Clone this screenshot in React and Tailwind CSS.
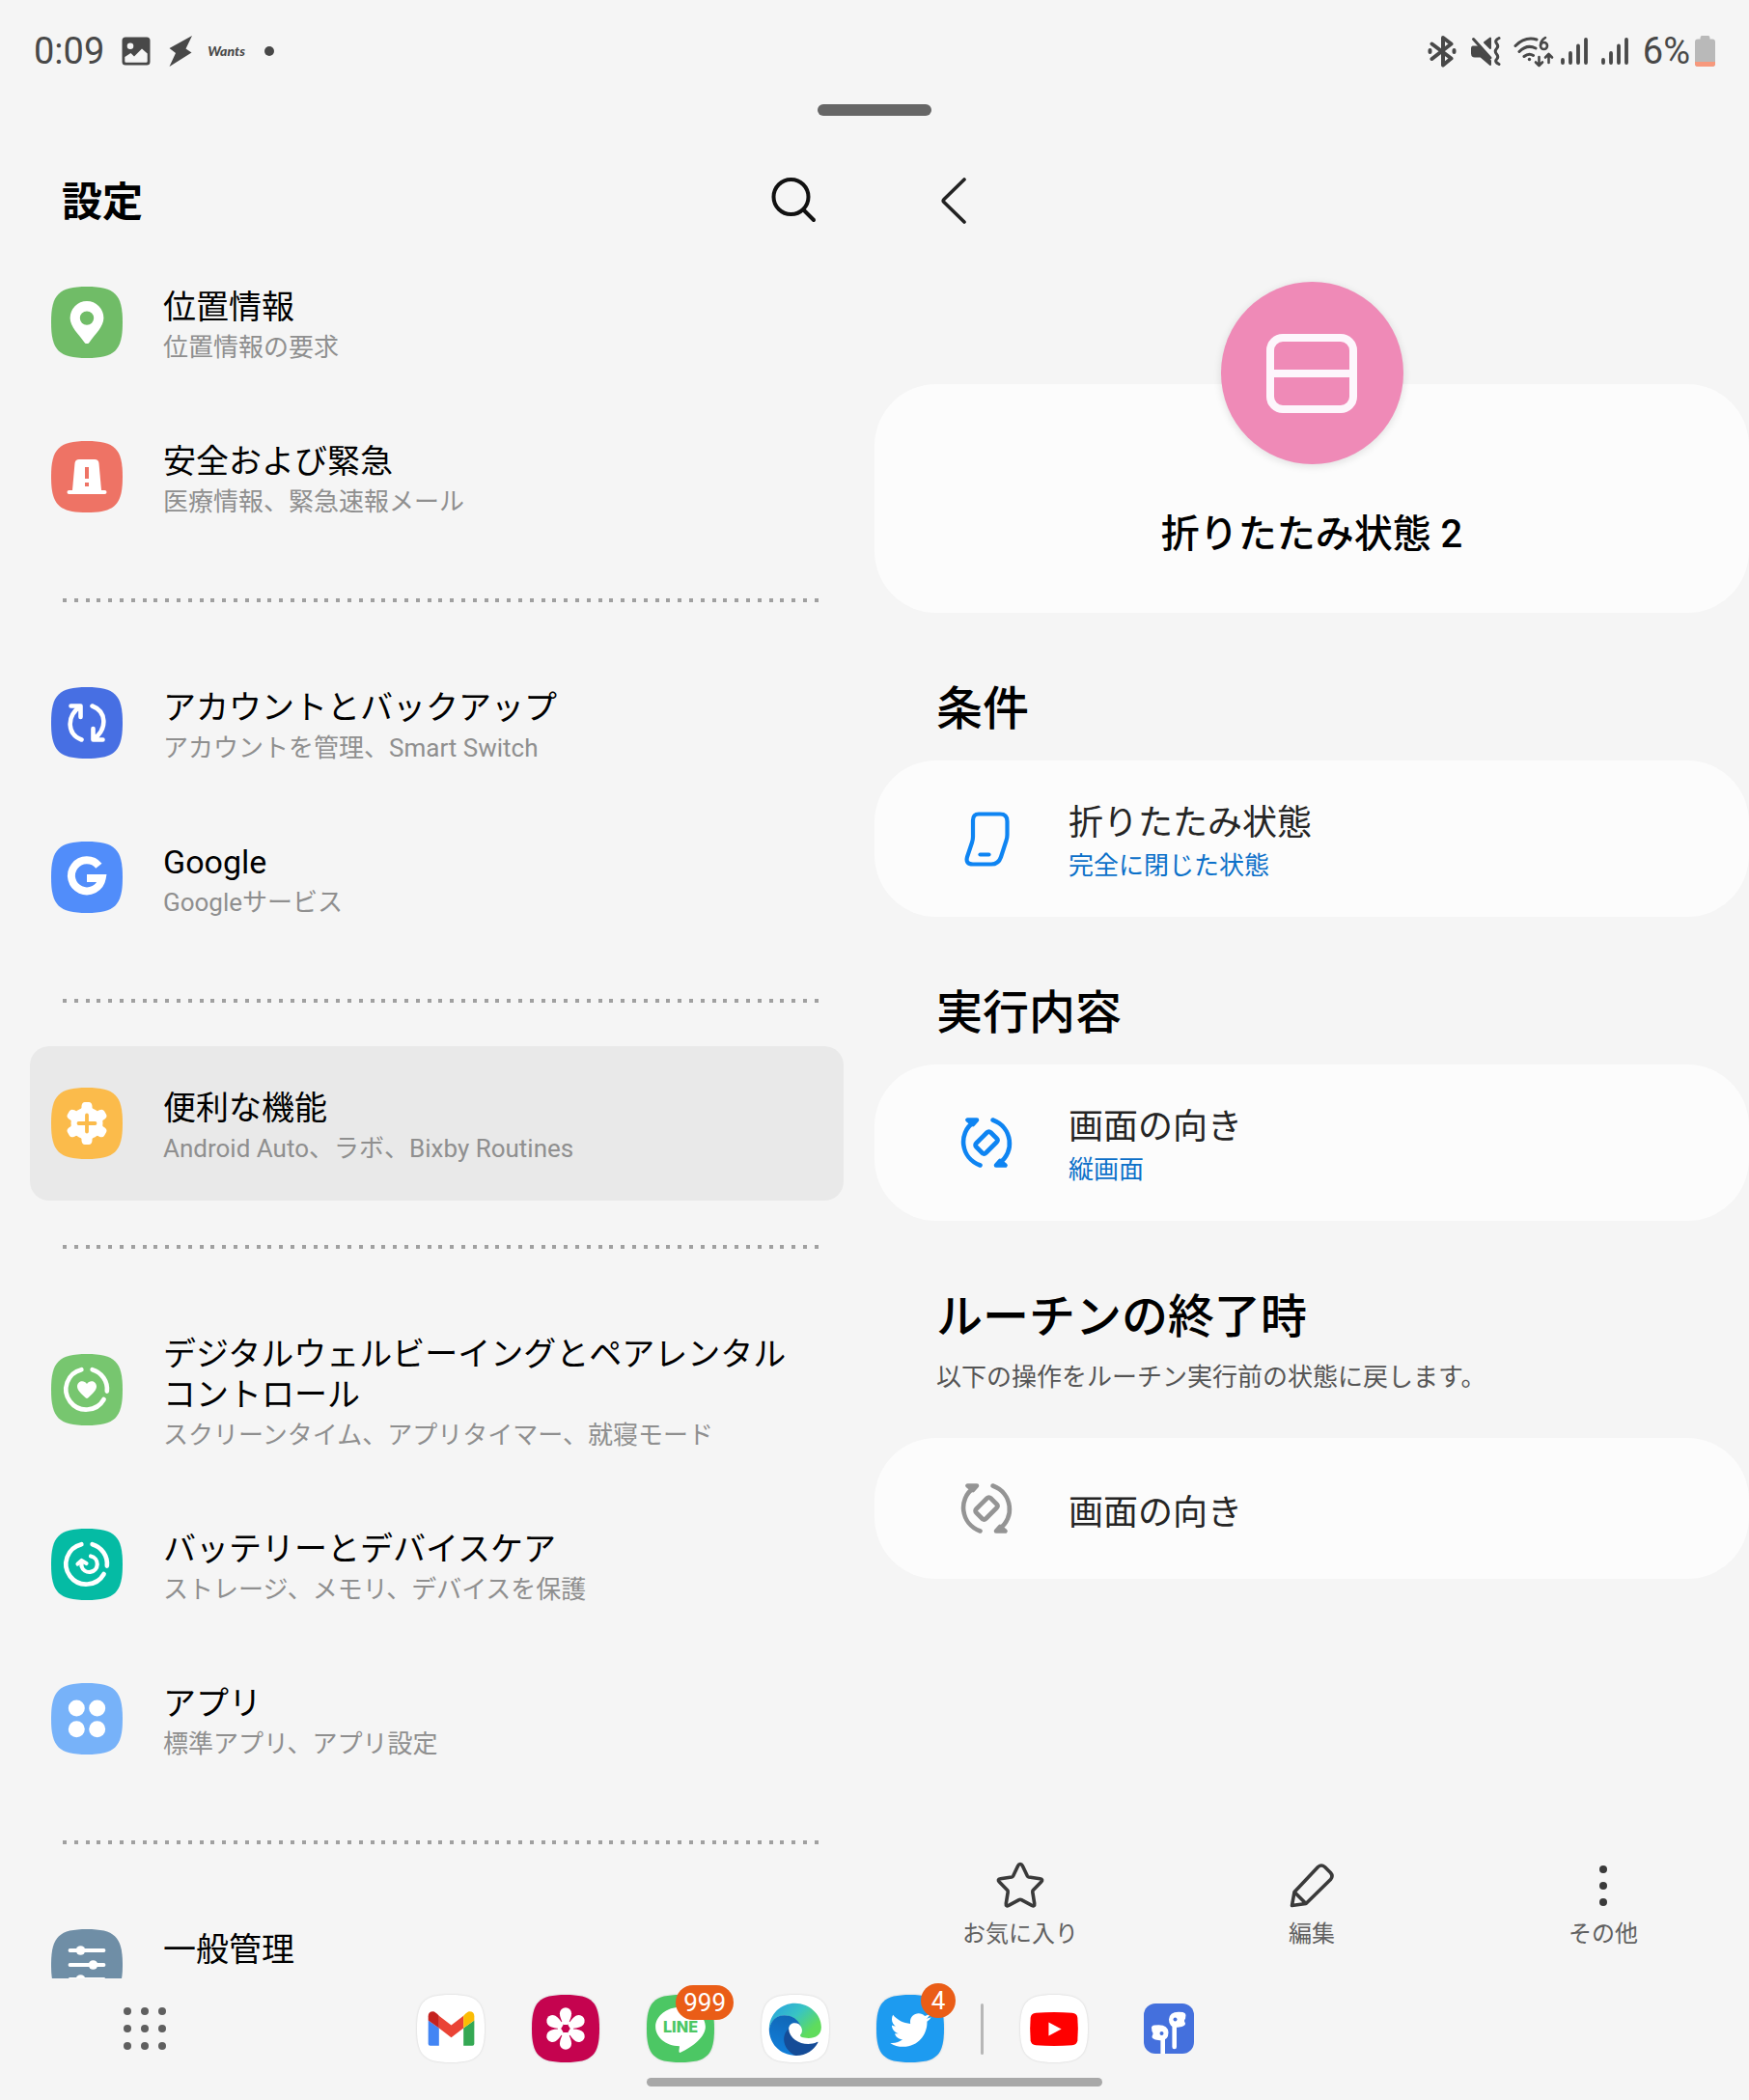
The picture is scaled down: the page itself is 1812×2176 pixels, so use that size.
import React from "react";
import { FaTwitter } from "react-icons/fa";

const TILE = "M37 0C66 0 74 8 74 37S66 74 37 74 0 66 0 37 8 0 37 0Z";

function Tile({ color, children }) {
  return (
    <svg viewBox="0 0 74 74" className="size-[74px] shrink-0" aria-hidden="true">
      <path d={TILE} fill={color} />
      {children}
    </svg>
  );
}

const stroke = { fill: "none", stroke: "#fff", strokeLinecap: "round", strokeLinejoin: "round" };

const CareRing = () => (
  <g {...stroke} strokeWidth="4.6">
    <path d="M42.6 16.2A21 21 0 0 1 57.8 38.6" />
    <path d="M54.6 47A21 21 0 1 1 31.4 16.2" />
  </g>
);

const icons = {
  location: (
    <Tile color="#70bc67">
      <path fill="#fff" fillRule="evenodd" d="M37 15a17.4 17.4 0 0 0-17.4 17.6c0 9 9 17 15 25.3a3 3 0 0 0 4.8 0c6-8.3 15-16.3 15-25.3A17.4 17.4 0 0 0 37 15Zm0 10.4a7.2 7.2 0 1 1 0 14.4 7.2 7.2 0 0 1 0-14.4Z" />
    </Tile>
  ),
  safety: (
    <Tile color="#ee7365">
      <path fill="#fff" d="M29 19h16q4 0 4.500 4l2.500 28H22l2.500-28q.5-4 4.500-4Z" />
      <path d="M18.500 53h37" stroke="#fff" strokeWidth="4" strokeLinecap="round" />
      <path d="M35 27h4v12h-4zM35 43h4v4h-4z" fill="#ee7365" />
    </Tile>
  ),
  account: (
    <Tile color="#476fe3">
      <g {...stroke} strokeWidth="4.6">
        <path d="M31.500 54.500C17 49 15 31 30 20M20.500 19.500H30.500V31" />
        <path d="M42.500 19.500C57 25 59 43 44 54M53.500 54.500H43.500V43" />
      </g>
    </Tile>
  ),
  google: (
    <Tile color="#518dfa">
      <path d="M49.400 25.300A16 16 0 1 0 52.700 38.100H37" fill="none" stroke="#fff" strokeWidth="8" />
    </Tile>
  ),
  advanced: (
    <Tile color="#fbbb4b">
      <g fill="#fff">
        <circle cx="37" cy="37" r="16.500" />
        {[0, 60, 120, 180, 240, 300].map((a) => (
          <path key={a} transform={`rotate(${a} 37 37)`} d="M27 25q4-.5 4.500-4.500V19q.5-4 3.500-4h4q3 0 3.500 4v1.500q.5 4 4.500 4.500Z" />
        ))}
      </g>
      <path d="M37 28.500v17M28.500 37h17" stroke="#fbbb4b" strokeWidth="3.800" strokeLinecap="round" />
    </Tile>
  ),
  wellbeing: (
    <Tile color="#77c66f">
      <CareRing />
      <path fill="#fff" d="M37 31c3-5 10-3 10 2.500 0 4-3.500 7-8.500 11.800q-1.500 1.400-3 0C30.500 40.500 27 37.500 27 33.500 27 28 34 26 37 31Z" />
    </Tile>
  ),
  battery: (
    <Tile color="#05bba4">
      <CareRing />
      <g {...stroke} strokeWidth="4.200">
        <path d="M41 28.500a8.300 8.300 0 1 1-9.500 10.500V34" />
        <path d="M27.500 36.500L31.500 33l5 3" />
      </g>
    </Tile>
  ),
  apps: (
    <Tile color="#77b2f9">
      <g fill="#fff">
        <circle cx="26.300" cy="26" r="8.500" />
        <circle cx="47.700" cy="26" r="8.500" />
        <circle cx="26.300" cy="47.700" r="8.500" />
        <circle cx="47.700" cy="47.700" r="8.500" />
      </g>
    </Tile>
  ),
  general: (
    <Tile color="#6f8ea6">
      <path d="M19.500 22h35M19.500 37h35M19.500 52h35" {...stroke} strokeWidth="3.800" />
      <g fill="#fff">
        <circle cx="30.500" cy="22" r="4.800" />
        <circle cx="43.500" cy="37" r="4.800" />
        <circle cx="30.500" cy="52" r="4.800" />
      </g>
    </Tile>
  ),
};

const groups = [
  [
    { icon: "location", title: "位置情報", sub: "位置情報の要求" },
    { icon: "safety", title: "安全および緊急", sub: "医療情報、緊急速報メール" },
  ],
  [
    { icon: "account", title: "アカウントとバックアップ", sub: "アカウントを管理、Smart Switch" },
    { icon: "google", title: "Google", sub: "Googleサービス" },
  ],
  [{ icon: "advanced", title: "便利な機能", sub: "Android Auto、ラボ、Bixby Routines", selected: true }],
  [
    { icon: "wellbeing", title: "デジタルウェルビーイングとペアレンタルコントロール", sub: "スクリーンタイム、アプリタイマー、就寝モード" },
    { icon: "battery", title: "バッテリーとデバイスケア", sub: "ストレージ、メモリ、デバイスを保護" },
    { icon: "apps", title: "アプリ", sub: "標準アプリ、アプリ設定" },
  ],
  [{ icon: "general", title: "一般管理", sub: "" }],
];

function SettingRow({ icon, title, sub, selected }) {
  return (
    <a
      href="#"
      aria-current={selected ? "page" : undefined}
      className={`flex shrink-0 items-center gap-[42px] rounded-[20px] pr-10 pl-[22px] ${selected ? "bg-[#e9e9e9]" : ""}`}
    >
      {icons[icon]}
      <span className="flex min-h-[160px] min-w-0 flex-col pt-[43px] pb-[33px]">
        <span className="text-[34px] leading-[42px] text-black">{title}</span>
        <span className="text-[26px] leading-[42px] text-[#8f8f8f]">{sub}</span>
      </span>
    </a>
  );
}

function Divider() {
  return (
    <div className="flex h-[95px] shrink-0 items-center pr-6 pl-[34px]">
      <div className="h-1 w-full bg-[repeating-linear-gradient(to_right,#a0a0a0_0px,#a0a0a0_4px,transparent_4px,transparent_11.8px)]" />
    </div>
  );
}

function SettingsPane() {
  return (
    <section className="flex min-h-0 min-w-0 flex-col">
      <header className="flex shrink-0 items-center justify-between pt-16 pr-[60px] pb-[22px] pl-16">
        <h1 className="pt-1 text-[42px] leading-[44px] font-bold text-black">設定</h1>
        <button type="button" aria-label="検索" className="size-12">
          <svg viewBox="0 0 48 48" className="size-12" fill="none" stroke="#111" strokeWidth="4" strokeLinecap="round">
            <circle cx="21.500" cy="20" r="18" />
            <path d="M34.500 33.500L45 44" />
          </svg>
        </button>
      </header>
      <nav className="flex min-h-0 flex-1 flex-col overflow-hidden pr-8 pl-[31px]">
        {groups.map((rows, i) => (
          <React.Fragment key={i}>
            {i > 0 && <Divider />}
            {rows.map((r) => (
              <SettingRow key={r.icon} {...r} />
            ))}
          </React.Fragment>
        ))}
      </nav>
    </section>
  );
}

function FoldIcon() {
  return (
    <svg viewBox="0 0 60 60" className="size-[60px]" fill="none" stroke="currentColor" strokeWidth="4.200" strokeLinecap="round" strokeLinejoin="round">
      <path d="M22 4.500h22q7.500 0 7.500 7.500v14q0 3-1 6l-5.500 17q-2.500 7.500-10 7.500H16q-8 0-6-7.500l5-15q1-3 1-6V11q0-6.500 6-6.500Z" />
      <path d="M23.500 46.500h9" />
    </svg>
  );
}

function RotateIcon() {
  return (
    <svg viewBox="0 0 60 60" className="size-[60px]" fill="none" stroke="currentColor" strokeWidth="4.600" strokeLinecap="round" strokeLinejoin="round">
      <path d="M23.500 53.500C3 46 .5 20 16.500 9M10.500 6.500h9.500l-4 4.500Z" />
      <path d="M36.500 6.500C57 14 59.500 40 43.500 51M49.500 53.500H40l4-4.500Z" />
      <path d="M30.500 19.500q2-2 4 0l6 6q2 2 0 4L29.500 40.500q-2 2-4 0l-6-6q-2-2 0-4Z" />
    </svg>
  );
}

function Card({ icon, tint, title, value, tall }) {
  return (
    <button
      type="button"
      className={`flex w-full items-center gap-[55px] rounded-[64px] bg-[#fcfcfc] pl-[86px] text-left ${tall ? "min-h-[162px]" : "min-h-[146px]"}`}
    >
      <span className={tint}>{icon}</span>
      <span className="flex flex-col pt-[10px]">
        <span className="text-[36px] leading-[46px] text-[#252525]">{title}</span>
        {value && <span className="text-[26px] leading-[42px] text-[#0b70c9]">{value}</span>}
      </span>
    </button>
  );
}

function Heading({ children }) {
  return <h3 className="mt-16 pl-16 text-[48px] leading-[72px] font-medium text-black">{children}</h3>;
}

const actions = [
  {
    label: "お気に入り",
    icon: (
      <path d="M26 3.500q1.500 0 2.300 1.700l5 10.600q.5 1 1.600 1.200l11.600 1.700q3.600.6 1.200 3.300l-8.300 8.600q-.8.800-.6 2l1.900 11.800q.4 3.500-2.700 2l-10.700-5.800q-1.300-.7-2.600 0L14 46.400q-3.100 1.500-2.700-2l1.900-11.800q.2-1.200-.6-2L4.300 22q-2.400-2.700 1.200-3.300L17.100 17q1.100-.2 1.600-1.200l5-10.600Q24.500 3.500 26 3.500Z" />
    ),
  },
  {
    label: "編集",
    icon: <path d="M5.500 46.500L8 32.500 32.500 6.500q3.500-3 7 0l6 6q3 3.500 0 7L20 44.500ZM8 32.500l12 12" />,
  },
  {
    label: "その他",
    icon: (
      <g fill="currentColor" stroke="none">
        <circle cx="26" cy="9" r="4" />
        <circle cx="26" cy="26" r="4" />
        <circle cx="26" cy="43" r="4" />
      </g>
    ),
  },
];

function RoutinePane() {
  return (
    <section className="flex min-h-0 min-w-0 flex-col">
      <header className="flex shrink-0 items-center pt-16 pb-[22px] pl-[58px]">
        <button type="button" aria-label="戻る" className="size-12">
          <svg viewBox="0 0 48 48" className="size-12" fill="none" stroke="#222" strokeWidth="3.600" strokeLinecap="round" strokeLinejoin="round">
            <path d="M35 2L14 22.500q-1.500 1.500 0 3L35 46" />
          </svg>
        </button>
      </header>
      <div className="flex min-h-0 flex-1 flex-col overflow-hidden pt-36">
        <div className="flex flex-col items-center rounded-[64px] bg-[#fcfcfc] pb-[53px]">
          <div className="-mt-[106px] flex size-[189px] items-center justify-center rounded-full bg-[#ef8ab7] shadow-[0_2px_8px_rgba(0,0,0,0.12)]">
            <svg viewBox="0 0 94 82" className="h-[82px] w-[94px]" fill="none" stroke="#fdf6fc" strokeWidth="8">
              <rect x="4" y="4" width="86" height="74" rx="13" />
              <path d="M4 41h86" />
            </svg>
          </div>
          <h2 className="mt-[45px] text-[40px] leading-[56px] font-medium text-black">折りたたみ状態 2</h2>
        </div>
        <Heading>条件</Heading>
        <div className="mt-[17px]">
          <Card tall icon={<FoldIcon />} tint="text-[#0e84f2]" title="折りたたみ状態" value="完全に閉じた状態" />
        </div>
        <Heading>実行内容</Heading>
        <div className="mt-[17px]">
          <Card tall icon={<RotateIcon />} tint="text-[#0e84f2]" title="画面の向き" value="縦画面" />
        </div>
        <Heading>ルーチンの終了時</Heading>
        <p className="mt-[7px] mb-11 pl-16 text-[26px] leading-[38px] text-[#555]">以下の操作をルーチン実行前の状態に戻します。</p>
        <Card icon={<RotateIcon />} tint="text-[#949494]" title="画面の向き" />
      </div>
      <footer className="grid shrink-0 grid-cols-3 pb-7">
        {actions.map((a) => (
          <button key={a.label} type="button" className="flex flex-col items-center gap-[6px] text-[#3a3a3a]">
            <svg viewBox="0 0 52 52" className="size-[52px]" fill="none" stroke="currentColor" strokeWidth="3.600" strokeLinejoin="round">
              {a.icon}
            </svg>
            <span className="text-[24px] leading-[36px] text-[#606060]">{a.label}</span>
          </button>
        ))}
      </footer>
    </section>
  );
}

const SignalBars = () => (
  <svg viewBox="0 0 30 32" className="h-8 w-[30px]" stroke="currentColor" strokeWidth="3.800" strokeLinecap="round">
    <path d="M3 28v-3M11 28V18M19 28V10.500M27 28V4" />
  </svg>
);

function StatusBar() {
  return (
    <div className="flex h-[106px] shrink-0 items-center justify-between pr-[35px] pl-[35px] text-[#484848]">
      <div className="flex items-center">
        <time className="text-[38px] leading-[44px]">0:09</time>
        <svg viewBox="0 0 30 30" className="ml-[18px] size-[30px]" aria-hidden="true">
          <path fillRule="evenodd" fill="currentColor" d="M4 .5h22q3.500 0 3.500 3.500v22q0 3.500-3.500 3.500H4Q.5 29.500.5 26V4Q.5.5 4 .5ZM9 6.500a3.300 3.300 0 1 0 0 6.600 3.300 3.300 0 0 0 0-6.600ZM3.300 21v4.500q0 1.300 1.300 1.300h20.800q1.300 0 1.300-1.300V17.500L21 12.500l-8 8-3.500-3.500Z" />
        </svg>
        <svg viewBox="0 0 26 32" className="ml-[18px] h-8 w-[26px]" aria-hidden="true">
          <path fill="currentColor" d="M25 0L18.500 13.500 24.500 17.500 1.500 32 8 18 1.500 13Z" />
        </svg>
        <span className="ml-[15px] font-['Lato'] text-[14px] leading-5 font-black italic">Wants</span>
        <span className="ml-[20px] size-[10px] rounded-full bg-current" />
      </div>
      <div className="flex items-center">
        <svg viewBox="0 0 30 34" className="h-[34px] w-[30px]" fill="none" stroke="currentColor" strokeWidth="4" strokeLinecap="round" strokeLinejoin="round">
          <path d="M4.500 9.500L24.500 24.500 16 31.500V3L24.500 9.500 4.500 25" />
          <path d="M2.500 16v2M27.500 16v2" />
        </svg>
        <svg viewBox="0 0 32 34" className="ml-[14px] h-[34px] w-8" fill="none" stroke="currentColor" strokeLinecap="round" strokeLinejoin="round">
          <path fill="currentColor" strokeWidth="2" d="M21 3.500V14l-6-6ZM3 12.500h5L21 27v4L11 22.500H5q-3 0-3-3v-5q0-2 1-2Z" />
          <path strokeWidth="3" d="M3.500 4.500L21 24" />
          <path strokeWidth="3" d="M30 3.500q-5 2.500-2.500 5.500t0 5.500 0 5.500 0 5.500 2.500 5" />
        </svg>
        <svg viewBox="0 0 44 34" className="ml-3 h-[34px] w-11" fill="none" stroke="currentColor" strokeWidth="3" strokeLinecap="round" strokeLinejoin="round">
          <path d="M3 11.500Q13 1.500 25 5M7 17.500q8-8 17-3.500M12 22.500q5-4 9.500-1" />
          <circle cx="17.500" cy="25.500" r="1.700" fill="currentColor" stroke="none" />
          <path strokeWidth="2.600" d="M34 3q-5 3-5 8" />
          <circle cx="32.500" cy="11.500" r="3.500" strokeWidth="2.600" />
          <path strokeWidth="2.600" d="M27.500 23v9M24 28.500l3.500 3.500 3.500-3.500M37.500 29V20M34 23.500l3.500-3.500 3.500 3.500" />
        </svg>
        <span className="ml-[5px]"><SignalBars /></span>
        <span className="ml-3"><SignalBars /></span>
        <span className="ml-[14px] text-[38px] leading-[44px]">6%</span>
        <svg viewBox="0 0 21 32" className="ml-[5px] h-8 w-[21px]" aria-hidden="true">
          <path fill="#b9b9b9" d="M7 0h7q1.500 0 1.500 3.500H18q3 0 3 3V29q0 3-3 3H3q-3 0-3-3V6.500q0-3 3-3h2.500Q5.500 0 7 0Z" />
          <path fill="#f7997d" d="M0 27h21v2q0 3-3 3H3q-3 0-3-3Z" />
        </svg>
      </div>
    </div>
  );
}

function AppTile({ label, color = "#fff", badge, children }) {
  return (
    <button type="button" aria-label={label} className="relative size-[70px]">
      <svg viewBox="0 0 74 74" className="absolute inset-0 size-full drop-shadow-[0_0_1px_rgba(0,0,0,0.15)]">
        <path d={TILE} fill={color} />
      </svg>
      <svg viewBox="0 0 69 69" className="absolute inset-0 size-full">{children}</svg>
      {badge && (
        <span
          className={`absolute flex h-9 min-w-9 items-center justify-center rounded-full bg-[#ea5d17] px-2 text-[26px] leading-9 text-white ${badge.length > 1 ? "-top-[10px] -right-5" : "-top-3 -right-3"}`}
        >
          {badge}
        </span>
      )}
    </button>
  );
}

function Taskbar() {
  return (
    <div className="shrink-0">
      <div className="grid h-[102px] grid-cols-[1fr_auto_1fr] items-center pt-[2px]">
        <button type="button" aria-label="アプリ一覧" className="ml-[128px] grid w-11 grid-cols-3 gap-[10px]">
          {Array.from({ length: 9 }, (_, i) => (
            <span key={i} className="size-2 rounded-full bg-[#5f5f5f]" />
          ))}
        </button>
        <div className="-ml-[134px] flex items-center gap-[49px]">
          <AppTile label="Gmail">
            <path fill="#4285f4" d="M11.500 26l11 8V52h-9q-2 0-2-2Z" />
            <path fill="#34a853" d="M58.500 26l-11 8V52h9q2 0 2-2Z" />
            <path fill="#ea4335" d="M22.500 21.500L35 31l12.500-9.500V34L35 43.700 22.500 34Z" />
            <path fill="#c5221f" d="M11.500 26v-4q0-5 5-5 2 0 6 4.500V34Z" />
            <path fill="#fbbc04" d="M58.500 26v-4q0-5-5-5-2 0-6 4.500V34Z" />
          </AppTile>
          <AppTile label="ギャラリー" color="#c5034f">
            {[0, 60, 120, 180, 240, 300].map((a) => (
              <path key={a} fill="#fff" transform={`rotate(${a} 34.500 34.500)`} d="M32.500 30.500q-4-7-4-11.500a6 6 0 0 1 12 0q0 4.500-4 11.500Z" />
            ))}
            <circle cx="34.500" cy="34.500" r="6.500" fill="none" stroke="#fff" strokeWidth="3" />
          </AppTile>
          <AppTile label="LINE" color="#4cc764" badge="999">
            <path fill="#fff" d="M34.500 12.500c14 0 25.500 9 25.500 20 0 10-12 20-25.500 26.500q-2 .5-1.500-2l.5-4.500C19 52 9 43 9 32.500c0-11 11.500-20 25.500-20Z" />
            <text x="34.500" y="38" textAnchor="middle" fill="#4cc764" fontFamily="Inter, sans-serif" fontWeight="800" fontSize="16">LINE</text>
          </AppTile>
          <AppTile label="Edge">
            <defs>
              <linearGradient id="edgeTop" x1="0" y1="0" x2="1" y2="0.7">
                <stop offset="0.1" stopColor="#2aa5dd" />
                <stop offset="0.5" stopColor="#38c4c4" />
                <stop offset="0.9" stopColor="#5fdc5c" />
              </linearGradient>
              <linearGradient id="edgeSide" x1="0.6" y1="0" x2="0.3" y2="1">
                <stop offset="0" stopColor="#1166b5" />
                <stop offset="1" stopColor="#1180dc" />
              </linearGradient>
            </defs>
            <path fill="url(#edgeTop)" d="M7.700 35.300C8 19 20 8.700 34.300 8.700S61 20 61 33c0 8-6 11.300-13 11.300-6 0-9-1.300-8.500-3.300 2-2 2.500-5 1-8C37 26 31 21 23.500 21.300 15 21.500 9.500 27 7.700 35.300Z" />
            <path fill="url(#edgeSide)" d="M7.700 35.300C9 27 15 21 23.500 21c7.500 0 14 4 17 12-2-5.500-12.500-6-12.800 2-2 8 0 20 6.600 27C18 61.500 7.700 49 7.700 35.300Z" />
            <path fill="#154c97" d="M27.700 34.700C20 41 21 55 34.300 62 45 62.500 53 57 57.500 49q.5-1.300-1-.6C45 54 28.500 47 27.700 34.700Z" />
          </AppTile>
          <AppTile label="Twitter" color="#1d9bf0" badge="4">
            <FaTwitter x="14" y="15" size="42" color="#fff" />
          </AppTile>
          <span className="-mx-[11px] h-[53px] w-[3px] rounded-full bg-[#b7b7b7]" />
          <AppTile label="YouTube">
            <path fill="#f00" d="M16 18.500Q34.500 17 53 18.500q5 .5 5.500 5 1 11.500 0 23-.5 4.500-5.500 5-18.500 1.500-37 0-5-.5-5.500-5-1-11.500 0-23 .5-4.500 5.500-5Z" />
            <path fill="#fff" d="M29 28v14l13-7Z" />
          </AppTile>
          <button type="button" aria-label="Galaxy Buds" className="flex size-[70px] items-center justify-center">
            <svg viewBox="0 0 52 52" className="size-[52px]">
              <rect width="52" height="52" rx="12" fill="#4470dd" />
              <g stroke="#fff" strokeWidth="4.600" strokeLinecap="round">
                <path d="M19.700 32v20" strokeLinecap="butt" />
                <path d="M31.700 20v25" />
              </g>
              <path fill="#fff" d="M8 25q0-2 3-2.500 14-2 14.500 7.500Q25.500 39.500 15 38q-7-1-6.500-4 2-3 0-5Z" />
              <path fill="#fff" d="M43.500 12q0-2-3-3-14-2-14.500 7.500Q26 26 36.500 24.500q7-1 6.500-4-2-3 0-4.500Z" />
              <circle cx="18.500" cy="31" r="2" fill="#4470dd" />
              <circle cx="32.500" cy="16.500" r="2" fill="#4470dd" />
            </svg>
          </button>
        </div>
        <span />
      </div>
      <div className="flex h-6 justify-center">
        <span className="mt-px h-[9px] w-[26%] rounded-full bg-[#a8a8a8]" />
      </div>
    </div>
  );
}

export default function App() {
  return (
    <div className="flex h-screen flex-col overflow-hidden bg-[#f5f5f5] font-[Roboto,'Noto_Sans_CJK_JP',sans-serif]">
      <StatusBar />
      <div className="mt-[2px] flex shrink-0 justify-center">
        <span className="h-3 w-[118px] rounded-full bg-[#666]" />
      </div>
      <main className="grid min-h-0 flex-1 grid-cols-2 grid-rows-1">
        <SettingsPane />
        <RoutinePane />
      </main>
      <Taskbar />
    </div>
  );
}
